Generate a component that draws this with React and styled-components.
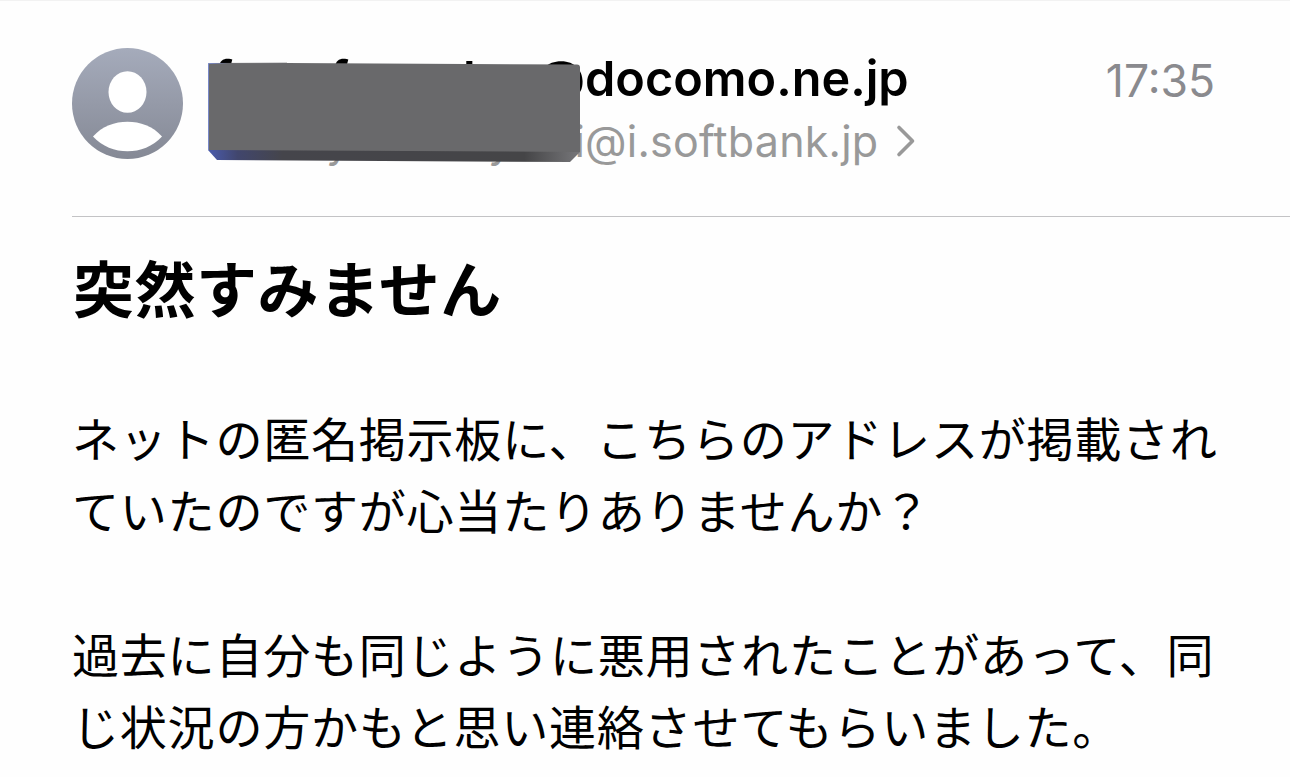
import React from "react";
import styled, { createGlobalStyle } from "styled-components";

const GlobalStyle = createGlobalStyle`
  body {
    margin: 0;
    background: #fff;
    overflow: hidden;
  }
`;

const MailWrapper = styled.main`
  box-sizing: border-box;
  width: 1290px;
  height: 777px;
  padding-left: 72px;
  border-top: 1px solid #f2f2f2;
  overflow: hidden;
  background: #fefefe;
  color: #000;
  font-family: Inter, "Noto Sans CJK JP", sans-serif;
`;

const Header = styled.header`
  box-sizing: border-box;
  display: flex;
  height: 216px;
  padding: 47px 75px 0 0;
  border-bottom: 1px solid #c3c3c5;
`;

const Avatar = styled.svg`
  flex: none;
  width: 111px;
  height: 111px;
`;

const Addresses = styled.div`
  position: relative;
  flex: 1;
  margin-left: 26px;
`;

const AddressLine = styled.div`
  display: flex;
  align-items: center;
  white-space: nowrap;
`;

const Sender = styled(AddressLine)`
  height: 60px;
  font-size: 48.6px;
  font-weight: 600;
`;

const Recipient = styled(AddressLine)`
  height: 66px;
  color: #999;
  font-size: 43px;
  letter-spacing: 0.2px;
`;

const Letter = styled.span`
  flex: none;
  width: ${props => props.$width}px;
`;

const Chevron = styled.svg`
  width: 20px;
  height: 34px;
  margin-left: 18px;
`;

const Redaction = styled.svg`
  position: absolute;
  top: 12px;
  left: -2px;
  width: 376px;
  height: 106px;
`;

const Time = styled.time`
  height: 62px;
  color: #8a8a8e;
  font-size: 44.5px;
  line-height: 66px;
`;

const Subject = styled.h1`
  margin: 29px 0 0 1px;
  font-size: 61px;
  font-weight: 700;
  line-height: 90px;
  letter-spacing: 0.5px;
`;

const Paragraph = styled.p`
  margin: ${props => props.$top}px 0 0;
  font-size: 47.1px;
  line-height: 72px;
  letter-spacing: 0.7px;
  white-space: nowrap;
`;

export default function App() {
  return (
    <>
      <GlobalStyle />
      <MailWrapper>
        <Header>
          <Avatar viewBox="0 0 111 111">
            <defs>
              <linearGradient id="avatar" x1="0" y1="0" x2="0" y2="1">
                <stop offset="0" stopColor="#a5abbb" />
                <stop offset="1" stopColor="#858995" />
              </linearGradient>
            </defs>
            <circle cx="55.5" cy="55.5" r="55.5" fill="url(#avatar)" />
            <ellipse cx="55.5" cy="44" rx="19" ry="20.8" fill="#fff" />
            <path
              d="M21 88.5C30 78 43 73.7 55.5 73.7S81 78 90 88.5C81 98.5 68 103.3 55.5 103.3S30 98.5 21 88.5Z"
              fill="#fff"
            />
          </Avatar>
          <Addresses>
            <Sender>
              <Letter $width={5} />
              <Letter $width={116}>f</Letter>
              <Letter $width={133}>f</Letter>
              <Letter $width={73.5}>h</Letter>
              @docomo.ne.jp
            </Sender>
            <Recipient>
              <Letter $width={117} />
              <Letter $width={162}>y</Letter>
              <Letter $width={86.5}>y</Letter>
              i@i.softbank.jp
              <Chevron viewBox="0 0 20 34" fill="none">
                <path
                  d="M3 3.5L16.5 17L3 30.5"
                  stroke="#999"
                  strokeWidth="3.6"
                  strokeLinecap="round"
                  strokeLinejoin="round"
                />
              </Chevron>
            </Recipient>
            <Redaction viewBox="0 0 376 106">
              <defs>
                <linearGradient id="bevel" x1="0" y1="0" x2="1" y2="0">
                  <stop offset="0" stopColor="#4a5bad" />
                  <stop offset="0.08" stopColor="#41466d" />
                  <stop offset="0.2" stopColor="#45454b" />
                  <stop offset="0.85" stopColor="#454547" />
                  <stop offset="1" stopColor="#77777a" />
                </linearGradient>
                <linearGradient id="edge" x1="0" y1="0" x2="1" y2="0">
                  <stop offset="0" stopColor="#7888c8" />
                  <stop offset="0.25" stopColor="#69696c" />
                </linearGradient>
              </defs>
              <path d="M1 90H372L373 92L363 102L10 100L1 90Z" fill="url(#bevel)" />
              <path
                d="M1 3.5L80 3L370 4.5Q373 4.5 373 7.5V92L1 90Z"
                fill="#69696b"
              />
              <path d="M1.5 90V3.5L80 3.2" fill="none" stroke="url(#edge)" />
            </Redaction>
          </Addresses>
          <Time>17:35</Time>
        </Header>
        <Subject>突然すみません</Subject>
        <Paragraph $top={68}>
          ネットの匿名掲示板に、こちらのアドレスが掲載され
          <br />
          ていたのですが心当たりありませんか？
        </Paragraph>
        <Paragraph $top={72}>
          過去に自分も同じように悪用されたことがあって、同
          <br />
          じ状況の方かもと思い連絡させてもらいました。
        </Paragraph>
      </MailWrapper>
    </>
  );
}
